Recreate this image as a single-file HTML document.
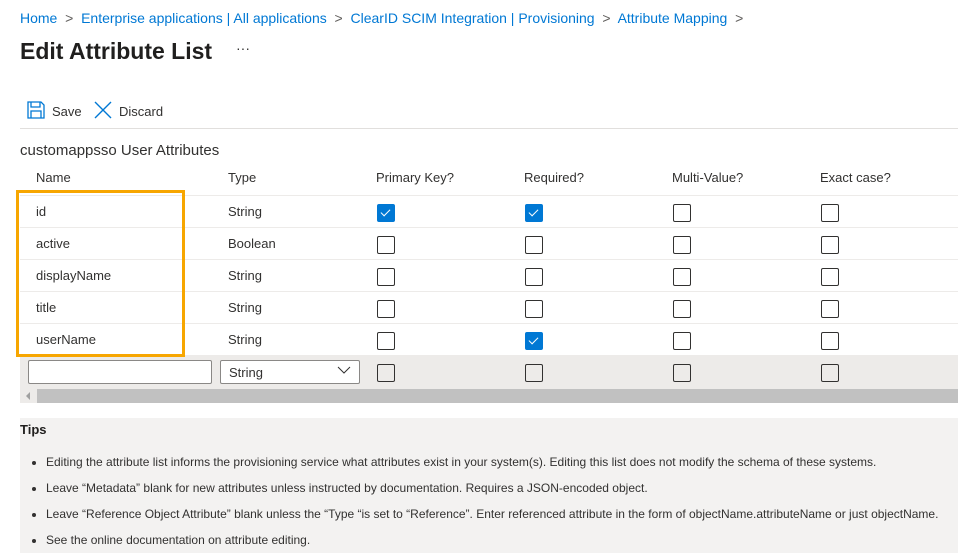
<!DOCTYPE html><html><head><style>
body{margin:0;width:958px;height:553px;overflow:hidden;background:#fff;font-family:"Liberation Sans",sans-serif;color:#323130;position:relative}
.a{position:absolute;white-space:nowrap}
.bc{top:10px;font-size:14px;color:#0078d4}
.cb{position:absolute;width:16px;height:16px;border:1px solid #323130;border-radius:2px}
.cb.on{background:#0078d4;border-color:#0078d4}
.cb.on::after{content:"";position:absolute;left:5px;top:2px;width:4px;height:8px;border:solid #fff;border-width:0 1.5px 1.5px 0;transform:rotate(45deg)}
.t{font-size:13px}
.row{position:absolute;left:20px;width:938px;height:31px;border-bottom:1px solid #edebe9}
li{margin-bottom:12px}
</style></head><body>
<div class="a bc" style="left:20px">Home &nbsp;<span style="color:#605e5c">&gt;</span>&nbsp; Enterprise applications | All applications &nbsp;<span style="color:#605e5c">&gt;</span>&nbsp; ClearID SCIM Integration | Provisioning &nbsp;<span style="color:#605e5c">&gt;</span>&nbsp; Attribute Mapping &nbsp;<span style="color:#605e5c">&gt;</span></div>
<div class="a" style="left:20px;top:38px;font-size:23px;font-weight:bold;color:#201f1e">Edit Attribute List</div>
<div class="a" style="left:236px;top:40px;font-size:14px">···</div>
<svg class="a" style="left:27px;top:101px" width="18" height="18" viewBox="0 0 18 18" fill="none" stroke="#0078d4" stroke-width="1.3"><path d="M1 1h13l3 3v13H1z"/><path d="M4 1v5h9V1M4 17v-7h10v7"/></svg>
<div class="a t" style="left:52px;top:104px">Save</div>
<svg class="a" style="left:94px;top:101px" width="18" height="18" viewBox="0 0 18 18" stroke="#0078d4" stroke-width="1.4"><path d="M1 1l16 16M17 1L1 17"/></svg>
<div class="a t" style="left:119px;top:104px">Discard</div>
<div class="a" style="left:20px;top:128px;width:938px;border-top:1px solid #e1dfdd"></div>
<div class="a" style="left:20px;top:142px;font-size:15px">customappsso User Attributes</div>
<div class="row" style="top:164px"></div>
<div class="a t" style="left:36px;top:170px">Name</div><div class="a t" style="left:228px;top:170px">Type</div><div class="a t" style="left:376px;top:170px">Primary Key?</div><div class="a t" style="left:524px;top:170px">Required?</div><div class="a t" style="left:672px;top:170px">Multi-Value?</div><div class="a t" style="left:820px;top:170px">Exact case?</div>
<div class="row" style="top:196px"></div><div class="row" style="top:228px"></div><div class="row" style="top:260px"></div><div class="row" style="top:292px"></div><div class="row" style="top:324px"></div>
<div class="a t" style="left:36px;top:204px">id</div><div class="a t" style="left:228px;top:204px">String</div>
<div class="a t" style="left:36px;top:236px">active</div><div class="a t" style="left:228px;top:236px">Boolean</div>
<div class="a t" style="left:36px;top:268px">displayName</div><div class="a t" style="left:228px;top:268px">String</div>
<div class="a t" style="left:36px;top:300px">title</div><div class="a t" style="left:228px;top:300px">String</div>
<div class="a t" style="left:36px;top:332px">userName</div><div class="a t" style="left:228px;top:332px">String</div>
<div class="a" style="left:20px;top:356px;width:938px;height:32px;background:#edebe9"></div>
<div class="a" style="left:28px;top:360px;width:182px;height:22px;border:1px solid #8a8886;background:#fff;border-radius:2px"></div>
<div class="a" style="left:220px;top:360px;width:138px;height:22px;border:1px solid #8a8886;background:#fff;border-radius:2px"></div>
<div class="a t" style="left:229px;top:365px">String</div>
<svg class="a" style="left:337px;top:366px" width="14" height="8"><path d="M1 1l6 6 6-6" stroke="#323130" fill="none"/></svg>
<div class="a" style="left:20px;top:388px;width:938px;height:15px;background:#edebe9"></div>
<div class="a" style="left:37px;top:389px;width:921px;height:14px;background:#c1c1c1"></div>
<div class="a" style="left:26px;top:392px;width:0;height:0;border:4px solid transparent;border-right:4px solid #a0a0a0;border-left:0"></div>
<script>
var ys=[204,236,268,300,332,364],xs=[377,525,673,821],on={"0,0":1,"0,1":1,"4,1":1};
for(var r=0;r<6;r++)for(var c=0;c<4;c++){var d=document.createElement('div');d.className='cb'+(on[r+','+c]?' on':'');d.style.left=xs[c]+'px';d.style.top=ys[r]+'px';document.body.appendChild(d);}
</script>
<div class="a" style="left:16px;top:190px;width:163px;height:161px;border:3px solid #f7a600"></div>
<div class="a" style="left:20px;top:418px;width:938px;height:135px;background:#f3f2f1"></div>
<div class="a" style="left:20px;top:422px;font-size:13px;font-weight:bold;color:#201f1e">Tips</div>
<ul class="a" style="left:0;top:455px;margin:0;padding-left:46px;font-size:12px;line-height:14px">
<li>Editing the attribute list informs the provisioning service what attributes exist in your system(s). Editing this list does not modify the schema of these systems.</li>
<li>Leave “Metadata” blank for new attributes unless instructed by documentation. Requires a JSON-encoded object.</li>
<li>Leave “Reference Object Attribute” blank unless the “Type “is set to “Reference”. Enter referenced attribute in the form of objectName.attributeName or just objectName.</li>
<li>See the online documentation on attribute editing.</li></ul>
</body></html>
